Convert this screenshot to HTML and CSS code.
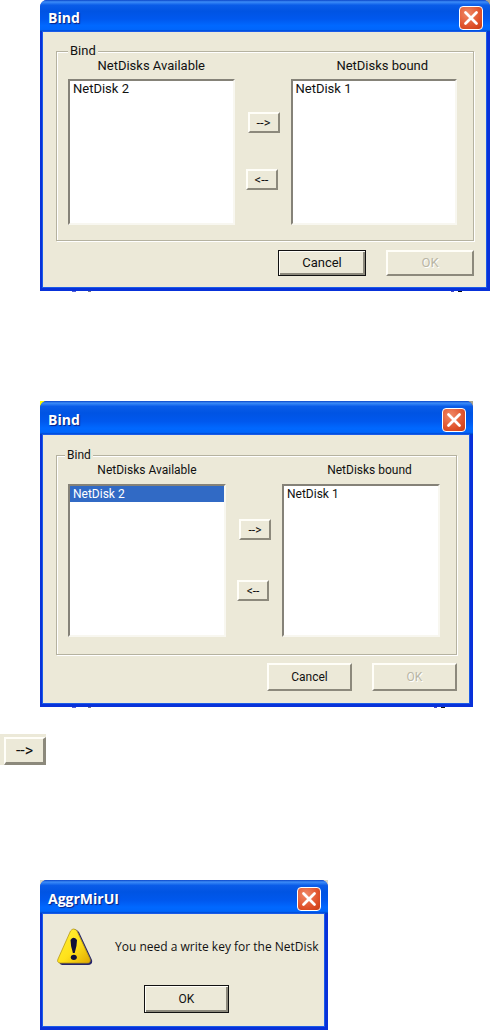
FILE: index.html
```html
<!DOCTYPE html>
<html lang="en">
<head>
<meta charset="utf-8">
<title>Bind</title>
<link rel="stylesheet" href="styles.css">
</head>
<body>
<main class="page">
  <div class="frame frame-large">
    <section class="dialog" aria-labelledby="title-1">
      <header class="titlebar">
        <h2 class="title" id="title-1">Bind</h2>
        <button class="close" type="button" aria-label="Close"><svg viewBox="0 0 20 20" class="cross"><path d="M5 5L15 15M15 5L5 15"/></svg></button>
      </header>
      <div class="body">
        <fieldset class="group">
          <legend class="legend">Bind</legend>
          <div class="picker">
            <label class="caption" for="available-1">NetDisks Available</label>
            <label class="caption caption-bound" for="bound-1">NetDisks bound</label>
            <select class="list" id="available-1" size="4"><option>NetDisk 2</option></select>
            <div class="movers">
              <button class="button mover mover-add" type="button">--&gt;</button>
              <button class="button mover" type="button">&lt;--</button>
            </div>
            <select class="list" id="bound-1" size="4"><option>NetDisk 1</option></select>
          </div>
        </fieldset>
        <div class="actions">
          <button class="button action default" type="button">Cancel</button>
          <button class="button action" type="button" disabled>OK</button>
        </div>
      </div>
    </section>
    <div class="edge"></div>
  </div>

  <div class="frame frame-medium">
    <section class="dialog" aria-labelledby="title-2">
      <header class="titlebar">
        <h2 class="title" id="title-2">Bind</h2>
        <button class="close" type="button" aria-label="Close"><svg viewBox="0 0 20 20" class="cross"><path d="M5 5L15 15M15 5L5 15"/></svg></button>
      </header>
      <div class="body">
        <fieldset class="group">
          <legend class="legend">Bind</legend>
          <div class="picker">
            <label class="caption" for="available-2">NetDisks Available</label>
            <label class="caption caption-bound" for="bound-2">NetDisks bound</label>
            <select class="list" id="available-2" size="4"><option selected>NetDisk 2</option></select>
            <div class="movers">
              <button class="button mover mover-add" type="button">--&gt;</button>
              <button class="button mover" type="button">&lt;--</button>
            </div>
            <select class="list" id="bound-2" size="4"><option>NetDisk 1</option></select>
          </div>
        </fieldset>
        <div class="actions">
          <button class="button action" type="button">Cancel</button>
          <button class="button action" type="button" disabled>OK</button>
        </div>
      </div>
    </section>
    <div class="edge"></div>
  </div>

  <div class="sample"><button class="button sample-button" type="button">--&gt;</button></div>

  <div class="frame frame-alert">
    <section class="dialog" aria-labelledby="title-3">
      <header class="titlebar">
        <h2 class="title" id="title-3">AggrMirUI</h2>
        <button class="close" type="button" aria-label="Close"><svg viewBox="0 0 20 20" class="cross"><path d="M5 5L15 15M15 5L5 15"/></svg></button>
      </header>
      <div class="body">
        <div class="message">
          <svg class="warning" viewBox="0 0 36 38" aria-hidden="true">
            <defs><linearGradient id="gold" x1="0" y1="0" x2="1" y2="1"><stop offset="0" stop-color="#fff13a"/><stop offset=".55" stop-color="#ffe11a"/><stop offset="1" stop-color="#e0a800"/></linearGradient></defs>
            <path d="M15 3Q18 -1 22 4L35 32Q36 37 31 37L5 37Q1 36 3 32Z" fill="#25256b"/>
            <path d="M13.500 3Q16.500 -1 20 3L33 31Q34 35 30 35L3 35Q-.5 34.500 1 31Z" fill="url(#gold)" stroke="#b99a18" stroke-width=".8"/>
            <path d="M13.500 12Q16.500 7.500 20 12Q20 18 17.700 25L15.900 25Q13.500 18 13.500 12Z" fill="#101038"/>
            <ellipse cx="16.800" cy="29.300" rx="3" ry="2.600" fill="#101038"/>
          </svg>
          <p class="message-text">You need a write key for the NetDisk</p>
        </div>
        <div class="actions">
          <button class="button action default" type="button">OK</button>
        </div>
      </div>
    </section>
  </div>
</main>
</body>
</html>
```
FILE: styles.css
```css
* { box-sizing: border-box; }

body {
  margin: 0;
  background: #fff;
  color: #111;
  font: 12px/14px Roboto, "Liberation Sans", sans-serif;
}

.page {
  display: flex;
  flex-direction: column;
}

.frame {
  --title-height: 34px;
  --list-height: 153px;
  --action-width: 85px;
  --action-height: 28px;
  margin-left: 40px;
}

.frame-large {
  --title-height: 32px;
  --list-height: 146px;
  --action-width: 88px;
  --action-height: 26px;
  max-width: 450px;
  font-size: 13px;
  background: linear-gradient(#a9a58f, #a9a58f) right top / 8px 8px no-repeat;
}

.frame-medium {
  max-width: 433px;
  margin-top: 109px;
  background:
    linear-gradient(#ff0, #ff0) left top / 8px 8px no-repeat,
    linear-gradient(#a9a58f, #a9a58f) right top / 8px 8px no-repeat;
}

.frame-alert {
  max-width: 288px;
  margin-top: 115px;
  background:
    linear-gradient(#d8d5c4, #d8d5c4) left top / 8px 6px no-repeat,
    linear-gradient(#d8d5c4, #d8d5c4) right top / 8px 6px no-repeat;
}

.dialog {
  overflow: hidden;
  border-radius: 7px 7px 0 0;
  background: #0831d9;
}

.titlebar {
  display: flex;
  align-items: center;
  justify-content: space-between;
  height: var(--title-height);
  padding: 3px 7px 0 8px;
  background: linear-gradient(#0a45c8 0, #3c8cf8 6%, #0a5ce8 16%, #0054e3 35%, #0058ee 60%, #0068ff 80%, #0066fc 92%, #0038b8 100%);
}

.title {
  margin: 0;
  color: #fff;
  font: bold 14px/18px "Open Sans", "Noto Sans", sans-serif;
  text-shadow: 1px 1px 1px #0a1f80;
}

.close {
  width: 24px;
  height: 24px;
  padding: 0;
  border: 1px solid #fff;
  border-radius: 4px;
  background: radial-gradient(circle at 35% 30%, #f08a68, #e0532c 60%, #c83a12);
}

.cross {
  display: block;
  width: 100%;
  fill: none;
  stroke: #fff;
  stroke-width: 2.500;
  stroke-linecap: round;
}

.body {
  margin: 0 4px 4px 3px;
  padding: 13px 12px 12px 13px;
  background: #ece9d8;
  outline: 1px solid #1a5be8;
}

.frame-large .body { padding: 12px 12px 12px 13px; }

.group {
  min-width: 0;
  margin: 0;
  padding: 0 16px 17px 11px;
  border: 1px solid #b5b2a0;
  box-shadow: 1px 1px #fff, inset 1px 1px #fff;
}

.frame-large .group { padding-bottom: 15px; }

.legend {
  padding: 0 2px;
  background: #ece9d8;
  line-height: 14px;
}

.frame-medium .legend { margin-left: -3px; }

.picker {
  display: grid;
  grid-template-columns: 1fr auto 1fr;
  row-gap: 6px;
}

.frame-large .picker { row-gap: 5px; }

.caption {
  line-height: 16px;
  text-align: center;
}

.caption-bound {
  grid-column: 3;
  padding-left: 17px;
}

.list {
  width: 100%;
  height: var(--list-height);
  padding: 0;
  overflow: hidden;
  border: 2px solid;
  border-color: #858278 #f8f7f0 #f8f7f0 #858278;
  border-radius: 0;
  outline: 0;
  background: #fff;
  color: #111;
  font: inherit;
}

.list option {
  min-height: 16px;
  padding: 0 3px;
  line-height: 16px;
}

.frame-medium .list option { padding-top: 1px; }

.list option:checked {
  background: #316ac5 linear-gradient(#316ac5, #316ac5);
  color: #fff;
  -webkit-text-fill-color: #fff;
}

.movers {
  display: flex;
  flex-direction: column;
  align-items: flex-start;
  gap: 40px;
  width: 56px;
  padding: 35px 11px 0;
}

.frame-large .movers {
  gap: 36px;
  padding-top: 33px;
}

.button {
  padding: 0;
  border: 2px solid;
  border-color: #fffef8 #8c897c #8c897c #fffef8;
  border-radius: 0;
  background: #ece9d8;
  color: #111;
  font: inherit;
}

.button:disabled {
  color: #b9b6a5;
  text-shadow: 1px 1px #fff;
}

.mover {
  width: 32px;
  height: 21px;
  line-height: 14px;
}

.mover-add { align-self: flex-end; }

.actions {
  display: flex;
  justify-content: flex-end;
  gap: 20px;
  margin-top: 8px;
}

.frame-large .actions { margin-top: 9px; }

.frame-large .body { padding-bottom: 11px; }

.action {
  width: var(--action-width);
  height: var(--action-height);
}

.default {
  border: 1px solid #111;
  box-shadow: inset 1px 1px #fffef8, inset -2px -2px #8c897c;
}

.edge {
  height: 1px;
  background:
    linear-gradient(#5560d8, #5560d8) 32px 0 / 4px 1px no-repeat,
    linear-gradient(#77758c, #77758c) 48px 0 / 3px 1px no-repeat,
    linear-gradient(#111, #111) right 28px top / 4px 1px no-repeat,
    linear-gradient(#4848c8, #4848c8) right 36px top / 3px 1px no-repeat;
}

.sample {
  width: 46px;
  margin-top: 26px;
  padding: 3px 0 0 4px;
  background: #ece9d8;
}

.sample-button {
  display: block;
  width: 100%;
  height: 28px;
  border-width: 2px 3px 3px 2px;
  font-size: 16px;
}

.frame-alert .body { padding: 14px 8px 13px 14px; }

.frame-alert .actions {
  justify-content: center;
  margin-top: 19px;
}

.message {
  display: flex;
  align-items: center;
  gap: 22px;
}

.warning {
  flex: none;
  width: 36px;
  height: 38px;
}

.message-text {
  margin: 0;
  font-family: "Open Sans", "Noto Sans", sans-serif;
  white-space: nowrap;
}
```
